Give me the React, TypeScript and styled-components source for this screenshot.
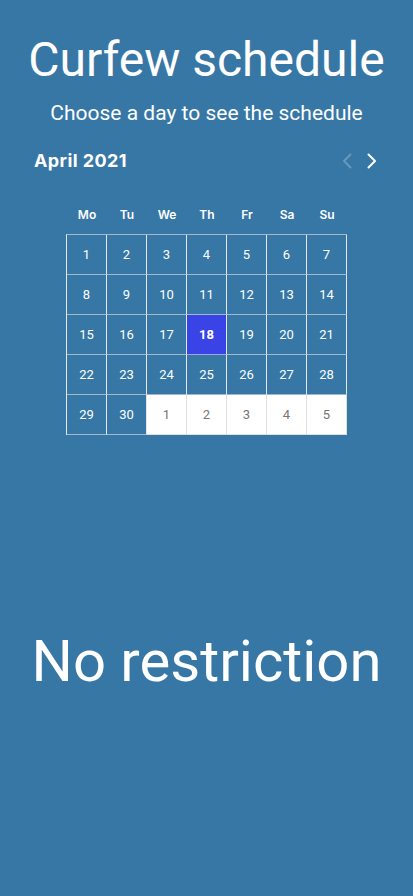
import React from "react";
import styled, { createGlobalStyle, css } from "styled-components";

const Global = createGlobalStyle`
  html, body { margin: 0; padding: 0; background: #3777a6; }
  * { box-sizing: border-box; }
`;

const Page = styled.div`
  min-height: 100vh;
  background: #3777a6;
  color: #ffffff;
  font-family: Roboto, "Liberation Sans", sans-serif;
  display: flex;
  flex-direction: column;
  align-items: center;
  padding-top: 32px;
`;

const Title = styled.h1`
  margin: 0;
  font-size: 48px;
  font-weight: 400;
  line-height: 56px;
  text-align: center;
`;

const Subtitle = styled.p`
  margin: 13px 0 0;
  font-size: 21px;
  line-height: 24px;
  text-align: center;
`;

const Calendar = styled.div`
  width: 100%;
  margin-top: 24px;
  display: flex;
  flex-direction: column;
  align-items: center;
`;

const Header = styled.div`
  width: 100%;
  display: flex;
  align-items: center;
  justify-content: space-between;
  padding: 0 31px 0 34px;
  height: 24px;
`;

const MonthLabel = styled.div`
  font-family: Inter, "Inter Variable", "Liberation Sans", sans-serif;
  font-weight: 700;
  font-size: 18px;
  letter-spacing: 0.4px;
  line-height: 24px;
`;

const Nav = styled.div`
  display: flex;
  gap: 5px;
`;

const NavButton = styled.button<{ $disabled?: boolean }>`
  width: 20px;
  height: 24px;
  padding: 0;
  border: none;
  background: transparent;
  display: flex;
  align-items: center;
  justify-content: center;
  color: ${(p) => (p.$disabled ? "rgba(255,255,255,0.25)" : "#ffffff")};
`;

const Weekdays = styled.div`
  margin-top: 32px;
  display: grid;
  grid-template-columns: repeat(7, 40px);
  padding-left: 1px;
`;

const Weekday = styled.div`
  font-family: Inter, "Inter Variable", "Liberation Sans", sans-serif;
  font-weight: 600;
  font-size: 12px;
  line-height: 20px;
  text-align: center;
`;

const Grid = styled.div`
  margin-top: 9px;
  display: grid;
  grid-template-columns: repeat(7, 40px);
  grid-auto-rows: 40px;
  border-top: 1px solid rgba(230, 230, 230, 0.6);
  border-left: 1px solid #e6e6e6;
`;

const Cell = styled.div<{ $muted?: boolean; $selected?: boolean }>`
  display: flex;
  align-items: center;
  justify-content: center;
  font-size: 13px;
  color: #ffffff;
  border-right: 1px solid #e6e6e6;
  border-bottom: 1px solid rgba(230, 230, 230, 0.6);
  ${(p) =>
    p.$muted &&
    css`
      background: #ffffff;
      color: #757575;
      border-right-color: #e0e0e0;
      border-bottom-color: #e0e0e0;
    `}
  ${(p) =>
    p.$selected &&
    css`
      background: #3a44e6;
      font-weight: 700;
    `}
`;

const Status = styled.div`
  margin-top: 192px;
  font-size: 58px;
  line-height: 68px;
  font-weight: 400;
  text-align: center;
`;

const Chevron = ({ dir }: { dir: "left" | "right" }) => (
  <svg width="10" height="16" viewBox="0 0 10 16" fill="none">
    <polyline
      points={dir === "left" ? "8.5,1.5 2,8 8.5,14.5" : "1.5,1.5 8,8 1.5,14.5"}
      stroke="currentColor"
      strokeWidth="2"
      strokeLinecap="round"
      strokeLinejoin="round"
    />
  </svg>
);

const weekdays = ["Mo", "Tu", "We", "Th", "Fr", "Sa", "Su"];

const days: { n: number; muted?: boolean }[] = [
  ...Array.from({ length: 30 }, (_, i) => ({ n: i + 1 })),
  ...Array.from({ length: 5 }, (_, i) => ({ n: i + 1, muted: true })),
];

export default function App() {
  return (
    <>
      <Global />
      <Page>
        <Title>Curfew schedule</Title>
        <Subtitle>Choose a day to see the schedule</Subtitle>
        <Calendar>
          <Header>
            <MonthLabel>April 2021</MonthLabel>
            <Nav>
              <NavButton $disabled aria-label="Previous month">
                <Chevron dir="left" />
              </NavButton>
              <NavButton aria-label="Next month">
                <Chevron dir="right" />
              </NavButton>
            </Nav>
          </Header>
          <Weekdays>
            {weekdays.map((w) => (
              <Weekday key={w}>{w}</Weekday>
            ))}
          </Weekdays>
          <Grid>
            {days.map((d, i) => (
              <Cell key={i} $muted={d.muted} $selected={!d.muted && d.n === 18}>
                {d.n}
              </Cell>
            ))}
          </Grid>
        </Calendar>
        <Status>No restriction</Status>
      </Page>
    </>
  );
}
